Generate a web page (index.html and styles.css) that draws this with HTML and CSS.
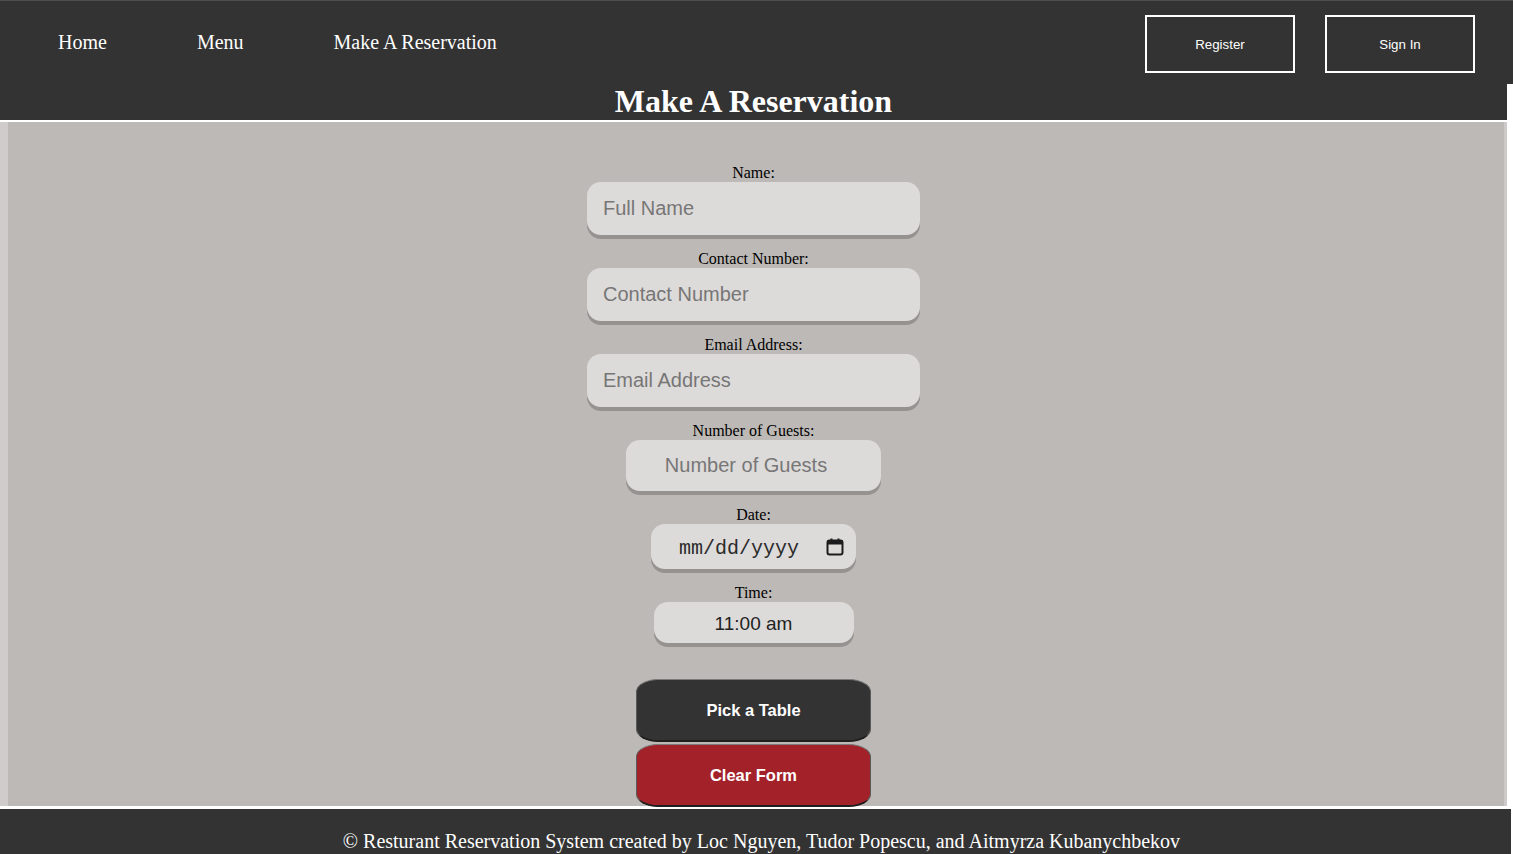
FILE: index.html
```html
<!DOCTYPE html>
<html lang="en">
<head>
<meta charset="utf-8">
<title>Make A Reservation</title>
<link rel="stylesheet" href="styles.css">
</head>
<body>
<header class="topbar">
  <nav class="links">
    <a href="#">Home</a>
    <a href="#">Menu</a>
    <a href="#">Make A Reservation</a>
  </nav>
  <div class="auth">
    <button class="outline" type="button">Register</button>
    <button class="outline" type="button">Sign In</button>
  </div>
</header>
<h1 class="title">Make A Reservation</h1>
<main class="content">
  <form class="form">
    <label class="lbl" for="name">Name:</label>
    <input class="field wide" id="name" type="text" placeholder="Full Name">
    <label class="lbl" for="phone">Contact Number:</label>
    <input class="field wide" id="phone" type="text" placeholder="Contact Number">
    <label class="lbl" for="email">Email Address:</label>
    <input class="field wide" id="email" type="text" placeholder="Email Address">
    <label class="lbl" for="guests">Number of Guests:</label>
    <input class="field guests" id="guests" type="text" placeholder="Number of Guests">
    <label class="lbl">Date:</label>
    <div class="field date">
      <span>mm/dd/yyyy</span>
      <svg class="cal" width="18" height="18" viewBox="0 0 18 18" aria-hidden="true">
        <rect x="1.5" y="2.5" width="15" height="14" rx="2" fill="none" stroke="#1c1c1c" stroke-width="2"/>
        <rect x="1.5" y="2.5" width="15" height="4" fill="#1c1c1c"/>
        <rect x="4.5" y="0.5" width="2" height="3" fill="#1c1c1c"/>
        <rect x="11.5" y="0.5" width="2" height="3" fill="#1c1c1c"/>
      </svg>
    </div>
    <label class="lbl" for="time">Time:</label>
    <input class="field time" id="time" type="text" value="11:00 am" readonly>
    <button class="btn dark" type="button">Pick a Table</button>
    <button class="btn red" type="reset">Clear Form</button>
  </form>
</main>
<footer class="footer">© Resturant Reservation System created by Loc Nguyen, Tudor Popescu, and Aitmyrza Kubanychbekov</footer>
</body>
</html>
```

FILE: styles.css
```css
html, body {
  margin: 0;
  padding: 0;
}
body {
  background: #ffffff;
  font-family: "Liberation Serif", "Times New Roman", serif;
  overflow: hidden;
}

.topbar {
  box-sizing: border-box;
  width: 1513px;
  height: 84px;
  background: #333333;
  border-top: 1px solid #4e4e4e;
  display: flex;
  justify-content: space-between;
  align-items: flex-start;
}
.links {
  display: flex;
  gap: 90px;
  padding-left: 58px;
  padding-top: 30px;
}
.links a {
  color: #ffffff;
  text-decoration: none;
  font-size: 20px;
  line-height: 23px;
}
.auth {
  display: flex;
  gap: 30px;
  padding-top: 14px;
  padding-right: 38px;
}
.outline {
  box-sizing: border-box;
  width: 150px;
  height: 58px;
  background: transparent;
  border: 2px solid #ffffff;
  color: #ffffff;
  font-family: "Liberation Sans", Arial, sans-serif;
  font-size: 13.33px;
  padding: 0;
}

.title {
  margin: 0;
  width: 1507px;
  height: 36px;
  line-height: 35px;
  background: #333333;
  color: #ffffff;
  text-align: center;
  font-size: 32px;
  font-weight: bold;
}

.content {
  box-sizing: border-box;
  width: 1507px;
  height: 684px;
  margin-top: 2px;
  padding-top: 41px;
  background: linear-gradient(to right, #d0cccb 0, #d0cccb 8px, #bdb9b6 8px, #bdb9b6 1504px, #cdc9c8 1504px);
}
.form {
  display: flex;
  flex-direction: column;
  align-items: center;
}
.lbl {
  display: block;
  font-size: 16px;
  line-height: 19px;
  color: #000000;
}
.field {
  box-sizing: border-box;
  border: none;
  outline: none;
  border-radius: 14px;
  background: #dddbda;
  box-shadow: 0 4px 0 #96928f;
  font-family: "Liberation Sans", Arial, sans-serif;
  font-size: 20px;
  color: #222222;
  padding: 0 16px;
  margin: 0 0 14px 0;
}
.field::placeholder {
  color: #777676;
}
.wide {
  width: 333px;
  height: 53px;
}
.guests {
  width: 255px;
  height: 51px;
  text-align: center;
  padding-right: 31px;
}
.date {
  width: 205px;
  height: 45px;
  display: flex;
  align-items: center;
  justify-content: space-between;
  padding: 3px 12px 0 28px;
  font-family: "Liberation Mono", "Courier New", monospace;
  font-size: 20px;
  color: #2a2a2a;
}
.cal {
  display: block;
  margin-top: -3px;
}
.time {
  width: 200px;
  height: 41px;
  text-align: center;
  font-size: 19px;
  padding-top: 3px;
  margin-bottom: 36px;
}
.btn {
  box-sizing: border-box;
  width: 235px;
  height: 63px;
  border-radius: 22px / 13px;
  border: 1px solid #5a5a5a;
  border-top-color: #7a7a7a;
  border-bottom: 2px solid #1e1e1e;
  color: #ffffff;
  font-family: "Liberation Sans", Arial, sans-serif;
  font-weight: bold;
  font-size: 16.5px;
  padding: 0;
  margin: 0 0 2px 0;
}
.dark {
  background: #333333;
}
.red {
  background: #a32129;
}

.footer {
  box-sizing: border-box;
  width: 1511px;
  height: 60px;
  margin-top: 3px;
  background: #333333;
  color: #ffffff;
  text-align: center;
  font-size: 20px;
  line-height: 23px;
  padding-top: 21px;
  padding-left: 12px;
}
```
